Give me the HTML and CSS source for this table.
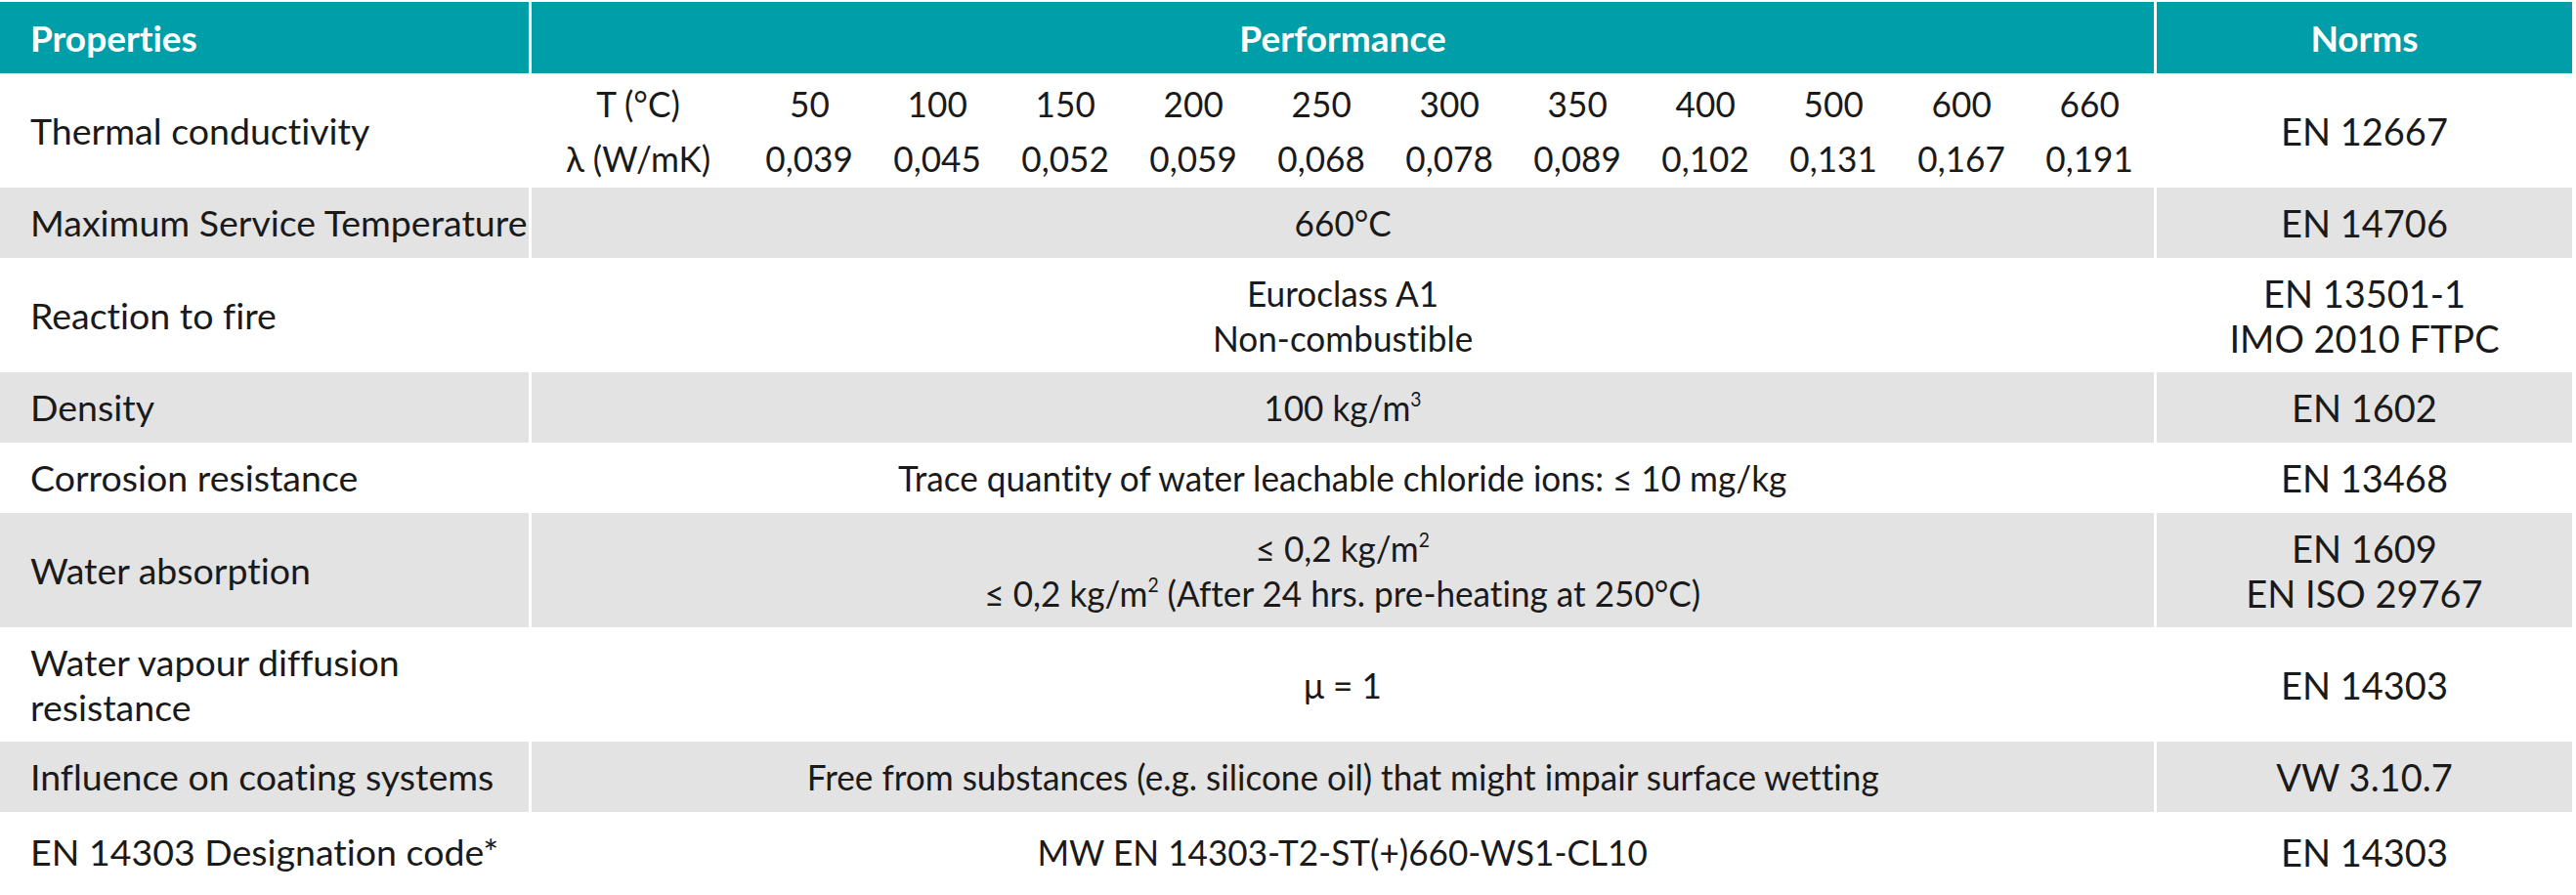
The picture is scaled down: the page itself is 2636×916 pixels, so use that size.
FILE: index.html
```html
<!DOCTYPE html>
<html lang="en">
<head>
<meta charset="utf-8">
<title>Properties</title>
<link rel="stylesheet" href="styles.css">
</head>
<body>
<div class="table">
  <div class="row head">
    <div class="cell prop">Properties</div>
    <div class="cell perf">Performance</div>
    <div class="cell norm">Norms</div>
  </div>

  <div class="row r-thermal">
    <div class="cell prop">Thermal conductivity</div>
    <div class="cell perf">
      <div class="lambda">
        <span class="c lbl"><span class="n">T (°C)</span></span>
        <span class="c"><span class="n">50</span></span>
        <span class="c"><span class="n">100</span></span>
        <span class="c"><span class="n">150</span></span>
        <span class="c"><span class="n">200</span></span>
        <span class="c"><span class="n">250</span></span>
        <span class="c"><span class="n">300</span></span>
        <span class="c"><span class="n">350</span></span>
        <span class="c"><span class="n">400</span></span>
        <span class="c"><span class="n">500</span></span>
        <span class="c"><span class="n">600</span></span>
        <span class="c"><span class="n">660</span></span>
        <span class="c lbl"><span class="n">λ (W/mK)</span></span>
        <span class="c"><span class="n">0,039</span></span>
        <span class="c"><span class="n">0,045</span></span>
        <span class="c"><span class="n">0,052</span></span>
        <span class="c"><span class="n">0,059</span></span>
        <span class="c"><span class="n">0,068</span></span>
        <span class="c"><span class="n">0,078</span></span>
        <span class="c"><span class="n">0,089</span></span>
        <span class="c"><span class="n">0,102</span></span>
        <span class="c"><span class="n">0,131</span></span>
        <span class="c"><span class="n">0,167</span></span>
        <span class="c"><span class="n">0,191</span></span>
      </div>
    </div>
    <div class="cell norm">EN 12667</div>
  </div>

  <div class="row gray r-single">
    <div class="cell prop">Maximum Service Temperature</div>
    <div class="cell perf"><span class="n">660°C</span></div>
    <div class="cell norm">EN 14706</div>
  </div>

  <div class="row r-double">
    <div class="cell prop">Reaction to fire</div>
    <div class="cell perf"><span class="n">Euroclass A1<br>Non-combustible</span></div>
    <div class="cell norm">EN 13501-1<br>IMO 2010 FTPC</div>
  </div>

  <div class="row gray r-single">
    <div class="cell prop">Density</div>
    <div class="cell perf"><span class="n">100 kg/m<sup>3</sup></span></div>
    <div class="cell norm">EN 1602</div>
  </div>

  <div class="row r-single">
    <div class="cell prop">Corrosion resistance</div>
    <div class="cell perf"><span class="n">Trace quantity of water leachable chloride ions: ≤ 10 mg/kg</span></div>
    <div class="cell norm">EN 13468</div>
  </div>

  <div class="row gray r-double">
    <div class="cell prop">Water absorption</div>
    <div class="cell perf"><span class="n">≤ 0,2 kg/m<sup>2</sup><br>≤ 0,2 kg/m<sup>2</sup> (After 24 hrs. pre-heating at 250°C)</span></div>
    <div class="cell norm">EN 1609<br>EN ISO 29767</div>
  </div>

  <div class="row r-double">
    <div class="cell prop">Water vapour diffusion<br>resistance</div>
    <div class="cell perf"><span class="n">μ = 1</span></div>
    <div class="cell norm">EN 14303</div>
  </div>

  <div class="row gray r-single">
    <div class="cell prop">Influence on coating systems</div>
    <div class="cell perf"><span class="n">Free from substances (e.g. silicone oil) that might impair surface wetting</span></div>
    <div class="cell norm">VW 3.10.7</div>
  </div>

  <div class="row r-last">
    <div class="cell prop">EN 14303 Designation code*</div>
    <div class="cell perf"><span class="n">MW EN 14303-T2-ST(+)660-WS1-CL10</span></div>
    <div class="cell norm">EN 14303</div>
  </div>
</div>
</body>
</html>
```

FILE: styles.css
```css
html, body {
  margin: 0;
  padding: 0;
  background: #ffffff;
}

body {
  font-family: "Lato", "Liberation Sans", sans-serif;
  font-variant-ligatures: none;
  font-feature-settings: "liga" 0, "clig" 0, "dlig" 0, "calt" 0;
  color: #1a1a1a;
  width: 2636px;
  height: 916px;
  overflow: hidden;
}

.table {
  padding-top: 2px;
  width: 2632px;
}

.row {
  display: grid;
  grid-template-columns: 541px 1660px 425px;
  column-gap: 3px;
}

.cell {
  display: flex;
  align-items: center;
  font-size: 37.5px;
  line-height: 46px;
}

.cell.prop {
  padding-left: 31px;
}

.cell.perf,
.cell.norm {
  justify-content: center;
  text-align: center;
}

.cell.perf {
  font-size: 37px;
}

.cell.norm {
  font-size: 38px;
}

.head .cell {
  background: #009ea8;
  color: #ffffff;
  font-weight: 700;
  font-size: 37px;
  height: 73px;
}

.gray .cell {
  background: #e3e3e3;
}

.r-thermal { height: 117px; }
.r-single { height: 72px; }
.r-double { height: 117px; }
.r-last { height: 81px; }

.n {
  display: inline-block;
  transform: scaleX(0.95);
  transform-origin: center;
  white-space: nowrap;
}

.n sup {
  font-size: 0.55em;
  line-height: 0;
  vertical-align: 0.75em;
}

.lambda {
  display: grid;
  grid-template-columns: 219px repeat(11, 1fr);
  grid-auto-rows: 56px;
  width: 100%;
  align-self: center;
}

.lambda .c {
  display: flex;
  align-items: center;
  justify-content: center;
}
```
